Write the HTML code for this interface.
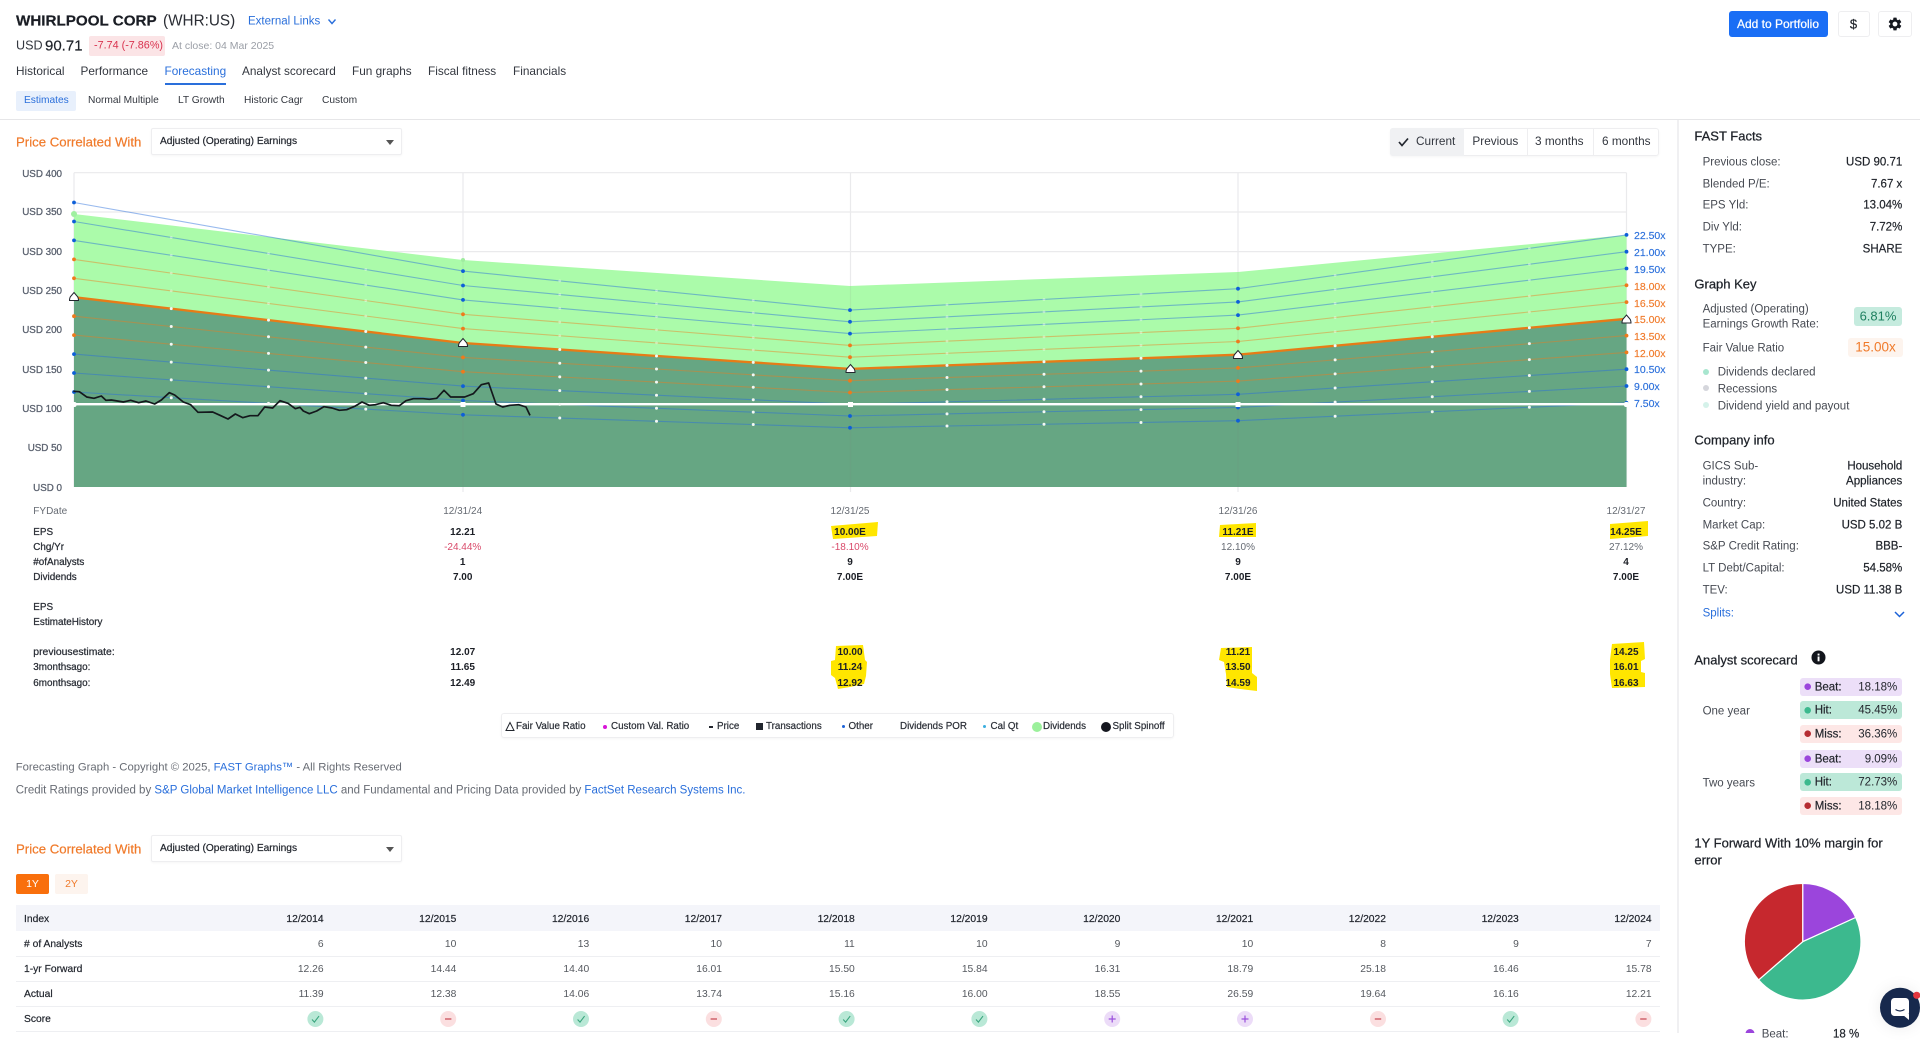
<!DOCTYPE html>
<html><head><meta charset="utf-8"><title>WHIRLPOOL CORP</title>
<style>
html,body{margin:0;padding:0;width:1920px;height:1033px;overflow:hidden;background:#fff;font-family:"Liberation Sans",sans-serif;color:#22262e}
.t{position:absolute;white-space:nowrap;transform:translateY(-50%);line-height:1}
.c{position:absolute;white-space:nowrap;transform:translate(-50%,-50%);line-height:1}
.r{position:absolute;white-space:nowrap;transform:translate(-100%,-50%);line-height:1}
.b{position:absolute;box-sizing:border-box}
.m{-webkit-text-stroke:.2px currentColor}
.tab{font-size:11.8px;color:#33373f}
.sub{font-size:10.2px;color:#33373f}
.y{font-size:9.8px;color:#5c6370;-webkit-text-stroke:.3px #5c6370;margin-top:1.1px}
.x{font-size:10.5px;-webkit-text-stroke:.15px}
.bl{color:#2a6fdb}.or{color:#f07a2a}
.l{font-size:9.9px;color:#2a2e36;-webkit-text-stroke:.25px #2a2e36;margin-top:1.2px}
.v{font-size:10px;font-weight:bold;color:#1c1f26;margin-top:1.2px}
.g{font-size:10px;color:#666b73;margin-top:1.2px}
.lg{font-size:9.8px;color:#2a2e36;-webkit-text-stroke:.2px #2a2e36}
.h{font-size:13px;color:#1e2229;-webkit-text-stroke:.25px #1e2229}
.k{font-size:11.5px;color:#474b53;margin-top:1.8px}
.w{font-size:11.5px;color:#1e2229;-webkit-text-stroke:.2px #1e2229;margin-top:1.8px}
.th{font-size:10.3px;color:#22262e;-webkit-text-stroke:.2px #22262e;margin-top:1.3px}
.td{font-size:10.3px;color:#55595f;margin-top:1.3px}
.pl{position:absolute;left:1800px;width:102.3px;height:18px;border-radius:3px}
.pt{font-size:11.5px;color:#23262d;margin-top:1.2px}
.dots line{stroke-dasharray:0 1 0 1 0 2;stroke-dashoffset:-1}
</style></head><body>
<!-- panel and header rules -->
<div class="b" style="left:0;top:119px;width:1920px;height:1px;background:#e6e6e8"></div>
<div class="b" style="left:1677px;top:120px;width:2px;height:913px;background:#f0f0f2"></div>

<svg class="b" style="left:0;top:0" width="1920" height="1033" viewBox="0 0 1920 1033">
<defs>
<marker id="mb" viewBox="-3 -3 6 6" markerWidth="6" markerHeight="6" markerUnits="userSpaceOnUse"><circle r="1.9" fill="#0d5fd8"/></marker>
<marker id="mo" viewBox="-3 -3 6 6" markerWidth="6" markerHeight="6" markerUnits="userSpaceOnUse"><circle r="1.9" fill="#ee7a1c"/></marker>
</defs>
<!-- grid -->
<g stroke="#eaeaec" stroke-width="1.2" fill="none">
<path d="M74 172.7H1626.5M74 212H1626.5M74 251.6H1626.5M74 172.7V487M463 172.7V492M850.5 172.7V492M1238 172.7V492M1626.5 172.7V487"/>
</g>
<!-- fills -->
<polygon fill="#abfbaa" points="74,214 463,260 850,286 1238,272 1626.5,235 1626.5,319 1238,354.7 850,368.9 463,343 74,297.2"/>
<polygon fill="#66a683" points="74,297.2 463,343 850,368.9 1238,354.7 1626.5,318.8 1626.5,487 74,487"/>
<path d="M463 260V487M850.5 286V487M1238 272V487" stroke="#808080" stroke-opacity=".1" stroke-width="1.2" fill="none"/>
<!-- yellow highlighter -->
<g fill="#ffe600">
<polygon points="831,526 878,522 877,536 833,539"/>
<polygon points="1220,525 1256,523 1256,537 1219,537"/>
<polygon points="1610,524 1648,521 1648,536 1610,539"/>
<polygon points="836,646 863,645 865,660 867,662 866,676 864,684 850,687 838,689 835,678 831,675 831,661 835,660"/>
<polygon points="1221,648 1252,647 1252,660 1252,673 1257,677 1257,691 1240,689 1227,687 1226,674 1224,662 1219,660"/>
<polygon points="1612,644 1644,642 1645,659 1641,661 1641,672 1645,673 1645,687 1612,688 1610,674 1610,660"/>
</g>
<!-- multiple lines -->
<g fill="none" stroke-width="1.1">
<g stroke="#2a6fdb" stroke-opacity=".48">
<polyline marker-start="url(#mb)" marker-mid="url(#mb)" marker-end="url(#mb)" points="74,202.5 463,271.1 850,310.1 1238,288.7 1626.5,234.9"/>
<polyline marker-start="url(#mb)" marker-mid="url(#mb)" marker-end="url(#mb)" points="74,221.5 463,285.5 850,321.8 1238,301.9 1626.5,251.7"/>
<polyline marker-start="url(#mb)" marker-mid="url(#mb)" marker-end="url(#mb)" points="74,240.4 463,299.9 850,333.6 1238,315.1 1626.5,268.5"/>
<polyline marker-start="url(#mb)" marker-mid="url(#mb)" marker-end="url(#mb)" points="74,354.1 463,386.1 850,404.3 1238,394.3 1626.5,369.2"/>
<polyline marker-start="url(#mb)" marker-mid="url(#mb)" marker-end="url(#mb)" points="74,373 463,400.5 850,416 1238,407.5 1626.5,386"/>
<polyline marker-start="url(#mb)" marker-mid="url(#mb)" marker-end="url(#mb)" points="74,392 463,414.8 850,427.8 1238,420.7 1626.5,402.8"/>
</g>
<g stroke="#f07a1a" stroke-opacity=".45">
<polyline marker-start="url(#mo)" marker-mid="url(#mo)" marker-end="url(#mo)" points="74,259.4 463,314.3 850,345.4 1238,328.3 1626.5,285.3"/>
<polyline marker-start="url(#mo)" marker-mid="url(#mo)" marker-end="url(#mo)" points="74,278.3 463,328.6 850,357.2 1238,341.5 1626.5,302.1"/>
<polyline marker-start="url(#mo)" marker-mid="url(#mo)" marker-end="url(#mo)" points="74,316.2 463,357.4 850,380.7 1238,367.9 1626.5,335.6"/>
<polyline marker-start="url(#mo)" marker-mid="url(#mo)" marker-end="url(#mo)" points="74,335.1 463,371.7 850,392.5 1238,381.1 1626.5,352.4"/>
</g>
<polyline stroke="#e67c17" stroke-width="2.3" points="74,297.2 463,343 850,368.9 1238,354.7 1626.5,318.8"/>
</g>
<!-- pale quarter dots in green zone -->
<g class="dots" stroke="#fff" stroke-opacity=".4" stroke-width="2.8" stroke-linecap="round" fill="none">
<line pathLength="4" x1="463" y1="271.1" x2="850" y2="310.1"/><line pathLength="4" x1="850" y1="310.1" x2="1238" y2="288.7"/><line pathLength="4" x1="1238" y1="288.7" x2="1626.5" y2="234.9"/>
<line pathLength="4" x1="74" y1="221.5" x2="463" y2="285.5"/><line pathLength="4" x1="463" y1="285.5" x2="850" y2="321.8"/><line pathLength="4" x1="850" y1="321.8" x2="1238" y2="301.9"/><line pathLength="4" x1="1238" y1="301.9" x2="1626.5" y2="251.7"/>
<line pathLength="4" x1="74" y1="240.4" x2="463" y2="299.9"/><line pathLength="4" x1="463" y1="299.9" x2="850" y2="333.6"/><line pathLength="4" x1="850" y1="333.6" x2="1238" y2="315.1"/><line pathLength="4" x1="1238" y1="315.1" x2="1626.5" y2="268.5"/>
<line pathLength="4" x1="74" y1="259.4" x2="463" y2="314.3"/><line pathLength="4" x1="463" y1="314.3" x2="850" y2="345.4"/><line pathLength="4" x1="850" y1="345.4" x2="1238" y2="328.3"/><line pathLength="4" x1="1238" y1="328.3" x2="1626.5" y2="285.3"/>
<line pathLength="4" x1="74" y1="278.3" x2="463" y2="328.6"/><line pathLength="4" x1="463" y1="328.6" x2="850" y2="357.2"/><line pathLength="4" x1="850" y1="357.2" x2="1238" y2="341.5"/><line pathLength="4" x1="1238" y1="341.5" x2="1626.5" y2="302.1"/>
</g>
<!-- white line -->
<rect x="74" y="403" width="1553" height="2.4" fill="#fff"/>
<!-- white quarter dots in dark zone -->
<g class="dots" stroke="#f4f8f5" stroke-width="3" stroke-linecap="round" fill="none">
<line pathLength="4" x1="74" y1="297.2" x2="463" y2="343"/><line pathLength="4" x1="463" y1="343" x2="850" y2="368.9"/><line pathLength="4" x1="850" y1="368.9" x2="1238" y2="354.7"/><line pathLength="4" x1="1238" y1="354.7" x2="1626.5" y2="318.8"/>
<line pathLength="4" x1="74" y1="316.2" x2="463" y2="357.4"/><line pathLength="4" x1="463" y1="357.4" x2="850" y2="380.7"/><line pathLength="4" x1="850" y1="380.7" x2="1238" y2="367.9"/><line pathLength="4" x1="1238" y1="367.9" x2="1626.5" y2="335.6"/>
<line pathLength="4" x1="74" y1="335.1" x2="463" y2="371.7"/><line pathLength="4" x1="463" y1="371.7" x2="850" y2="392.5"/><line pathLength="4" x1="850" y1="392.5" x2="1238" y2="381.1"/><line pathLength="4" x1="1238" y1="381.1" x2="1626.5" y2="352.4"/>
<line pathLength="4" x1="74" y1="354.1" x2="463" y2="386.1"/><line pathLength="4" x1="463" y1="386.1" x2="850" y2="404.3"/><line pathLength="4" x1="850" y1="404.3" x2="1238" y2="394.3"/><line pathLength="4" x1="1238" y1="394.3" x2="1626.5" y2="369.2"/>
<line pathLength="4" x1="74" y1="373" x2="463" y2="400.5"/><line pathLength="4" x1="463" y1="400.5" x2="850" y2="416"/><line pathLength="4" x1="850" y1="416" x2="1238" y2="407.5"/><line pathLength="4" x1="1238" y1="407.5" x2="1626.5" y2="386"/>
<line pathLength="4" x1="74" y1="392" x2="463" y2="414.8"/><line pathLength="4" x1="463" y1="414.8" x2="850" y2="427.8"/><line pathLength="4" x1="850" y1="427.8" x2="1238" y2="420.7"/><line pathLength="4" x1="1238" y1="420.7" x2="1626.5" y2="402.8"/>
</g>
<!-- dividend squares -->
<g fill="#fff"><rect x="460.5" y="402" width="5" height="5"/><rect x="848" y="402" width="5" height="5"/><rect x="1235.5" y="402" width="5" height="5"/><rect x="71.5" y="402" width="5" height="5" rx="2"/><rect x="1624" y="402" width="5" height="5" rx="2"/></g>
<circle cx="74" cy="214" r="3" fill="#a0f0a0"/>
<circle cx="463" cy="260" r="2" fill="#9fec9f"/>
<!-- price -->
<polyline fill="none" stroke="#14181c" stroke-width="1.7" stroke-linejoin="round" transform="translate(40,340) scale(.33333)" vector-effect="non-scaling-stroke" points="100,154 118,155 140,171 162,175 184,168 198,181 214,180 250,186 272,181 296,188 318,183 344,192 364,180 388,158 404,165 430,186 452,194 474,217 518,216 540,226 564,237 586,222 608,233 630,227 654,227 674,201 698,204 720,182 744,190 766,206 780,202 790,213 808,221 830,213 852,200 876,204 898,211 920,209 944,199 966,186 988,196 1006,194 1030,188 1054,196 1078,197 1098,182 1120,176 1150,176 1168,178 1190,175 1212,151 1232,171 1274,171 1300,161 1324,134 1346,129 1368,192 1388,201 1410,196 1436,194 1458,201 1470,226"/>
<!-- fair-value markers -->
<g fill="#fff" stroke="#22262e" stroke-width="1">
<path d="M69.5 300.5 Q69.5 297.5 71 296 L74 292.5 L77 296 Q78.5 297.5 78.5 300.5Z"/>
<path d="M458.5 346.5 Q458.5 343.5 460 342 L463 338.5 L466 342 Q467.5 343.5 467.5 346.5Z"/>
<path d="M846 372.5 Q846 369.5 847.5 368 L850.5 364.5 L853.5 368 Q855 369.5 855 372.5Z"/>
<path d="M1233.5 358.5 Q1233.5 355.5 1235 354 L1238 350.5 L1241 354 Q1242.5 355.5 1242.5 358.5Z"/>
<path d="M1622 323 Q1622 320 1623.5 318.5 L1626.5 315 L1629.5 318.5 Q1631 320 1631 323Z"/>
</g>
<!-- pie -->
<path d="M1802.7 941.7V883.4A58.3 58.3 0 0 1 1855.7 917.5Z" fill="#9b45dc" stroke="#fff" stroke-width="1.2"/>
<path d="M1802.7 941.7L1855.7 917.5A58.3 58.3 0 0 1 1758.6 979.9Z" fill="#3cb98e" stroke="#fff" stroke-width="1.2"/>
<path d="M1802.7 941.7L1758.6 979.9A58.3 58.3 0 0 1 1802.7 883.4Z" fill="#c6282e" stroke="#fff" stroke-width="1.2"/>
<circle cx="1750" cy="1033.5" r="4.5" fill="#9b45dc"/>
</svg>

<!-- header -->
<div class="t m" style="left:16px;top:20.7px;font-size:15.2px;font-weight:bold;color:#1a1d24">WHIRLPOOL CORP</div>
<div class="t" style="left:163px;top:20.7px;font-size:15.3px;color:#2a2d34">(WHR:US)</div>
<div class="t bl" style="left:248px;top:21.8px;font-size:11.5px">External Links</div>
<svg class="b" style="left:327px;top:17.5px" width="10" height="8" viewBox="0 0 10 8"><path d="M1.5 1.5L5 5.5L8.5 1.5" fill="none" stroke="#2a6fdb" stroke-width="1.4"/></svg>
<div class="t" style="left:16px;top:46.3px;font-size:12.6px;color:#33373f">USD</div>
<div class="t m" style="left:45px;top:46.3px;font-size:15px;color:#1e2229">90.71</div>
<div class="b" style="left:89px;top:36px;width:76px;height:20px;background:#fbe4e6;border-radius:2px"></div>
<div class="t" style="left:94px;top:46px;font-size:10.8px;color:#d9334f">-7.74 (-7.86%)</div>
<div class="t" style="left:172px;top:46px;font-size:10.5px;color:#9a9ea6">At close: 04 Mar 2025</div>

<div class="t tab" style="left:16px;top:72px">Historical</div>
<div class="t tab" style="left:80.5px;top:72px">Performance</div>
<div class="t tab bl" style="left:164.5px;top:72px">Forecasting</div>
<div class="b" style="left:164.5px;top:82.7px;width:61px;height:2px;background:#2a6fdb"></div>
<div class="t tab" style="left:242px;top:72px">Analyst scorecard</div>
<div class="t tab" style="left:352px;top:72px">Fun graphs</div>
<div class="t tab" style="left:428px;top:72px">Fiscal fitness</div>
<div class="t tab" style="left:513px;top:72px">Financials</div>

<div class="b" style="left:16px;top:91px;width:60px;height:20px;background:#e8f0fc;border-radius:2px"></div>
<div class="t sub bl" style="left:24px;top:100.7px">Estimates</div>
<div class="t sub" style="left:88px;top:100.7px">Normal Multiple</div>
<div class="t sub" style="left:178px;top:100.7px">LT Growth</div>
<div class="t sub" style="left:244px;top:100.7px">Historic Cagr</div>
<div class="t sub" style="left:322px;top:100.7px">Custom</div>

<!-- top right buttons -->
<div class="b" style="left:1728.5px;top:10.7px;width:99.5px;height:26.6px;background:#1a6ef5;border-radius:3px"></div>
<div class="c m" style="left:1778px;top:24px;font-size:12px;color:#fff">Add to Portfolio</div>
<div class="b" style="left:1837.6px;top:11px;width:32.4px;height:26px;border:1px solid #eeeef0;border-radius:3px"></div>
<div class="c m" style="left:1853.5px;top:24px;font-size:13px;color:#1e2229">$</div>
<div class="b" style="left:1878px;top:11px;width:33.6px;height:26px;border:1px solid #eeeef0;border-radius:3px"></div>
<svg class="b" style="left:1887px;top:16px" width="16" height="16" viewBox="0 0 24 24"><path fill="#15181f" d="M19.14 12.94c.04-.3.06-.61.06-.94 0-.32-.02-.64-.07-.94l2.03-1.58c.18-.14.23-.41.12-.61l-1.92-3.32c-.12-.22-.37-.29-.59-.22l-2.39.96c-.5-.38-1.03-.7-1.62-.94l-.36-2.54c-.04-.24-.24-.41-.48-.41h-3.84c-.24 0-.43.17-.47.41l-.36 2.54c-.59.24-1.13.57-1.62.94l-2.39-.96c-.22-.08-.47 0-.59.22L2.74 8.87c-.12.21-.08.47.12.61l2.03 1.58c-.05.3-.09.63-.09.94s.02.64.07.94l-2.03 1.58c-.18.14-.23.41-.12.61l1.92 3.32c.12.22.37.29.59.22l2.39-.96c.5.38 1.03.7 1.62.94l.36 2.54c.05.24.24.41.48.41h3.84c.24 0 .44-.17.47-.41l.36-2.54c.59-.24 1.13-.56 1.62-.94l2.39.96c.22.08.47 0 .59-.22l1.92-3.32c.12-.22.07-.47-.12-.61l-2.01-1.58zM12 15.6c-1.98 0-3.6-1.62-3.6-3.6s1.62-3.6 3.6-3.6 3.6 1.62 3.6 3.6-1.62 3.6-3.6 3.6z"/></svg>

<!-- price correlated 1 -->
<div class="t or m" style="left:16px;top:142px;font-size:13.2px">Price Correlated With</div>
<div class="b" style="left:151px;top:128px;width:251px;height:27px;border:1px solid #eeeef0;border-radius:2px;box-shadow:0 1px 2px rgba(0,0,0,.04)"></div>
<div class="t sub m" style="left:160px;top:142.4px;color:#22262e">Adjusted (Operating) Earnings</div>
<svg class="b" style="left:386px;top:139.5px" width="8" height="5"><path d="M0 0H8L4 5Z" fill="#555"/></svg>

<!-- segmented -->
<div class="b" style="left:1390px;top:128px;width:269px;height:28px;border:1px solid #eeeef0;border-radius:3px;box-shadow:0 1px 2px rgba(0,0,0,.04)"></div>
<div class="b" style="left:1390px;top:128px;width:73.5px;height:28px;background:#f0f1f3;border-radius:3px 0 0 3px"></div>
<div class="b" style="left:1527px;top:128px;width:1px;height:28px;background:#eeeef0"></div>
<div class="b" style="left:1592.5px;top:128px;width:1px;height:28px;background:#eeeef0"></div>
<svg class="b" style="left:1398px;top:137px" width="11" height="10"><path d="M1 5L4 8.5L10 1.5" fill="none" stroke="#22262e" stroke-width="1.7"/></svg>
<div class="t tab" style="left:1416px;top:142px">Current</div>
<div class="t tab" style="left:1472.4px;top:142px">Previous</div>
<div class="t tab" style="left:1535px;top:142px">3 months</div>
<div class="t tab" style="left:1602px;top:142px">6 months</div>

<!-- y axis -->
<div class="r y" style="left:62px;top:174px">USD 400</div>
<div class="r y" style="left:62px;top:212.3px">USD 350</div>
<div class="r y" style="left:62px;top:251.7px">USD 300</div>
<div class="r y" style="left:62px;top:291px">USD 250</div>
<div class="r y" style="left:62px;top:330.3px">USD 200</div>
<div class="r y" style="left:62px;top:369.7px">USD 150</div>
<div class="r y" style="left:62px;top:409px">USD 100</div>
<div class="r y" style="left:62px;top:448.3px">USD 50</div>
<div class="r y" style="left:62px;top:487.7px">USD 0</div>

<!-- right axis labels -->
<div class="t x bl" style="left:1634px;top:235.5px">22.50x</div>
<div class="t x bl" style="left:1634px;top:252.5px">21.00x</div>
<div class="t x bl" style="left:1634px;top:269.5px">19.50x</div>
<div class="t x or" style="left:1634px;top:286.5px">18.00x</div>
<div class="t x or" style="left:1634px;top:303.5px">16.50x</div>
<div class="t x or" style="left:1634px;top:320px">15.00x</div>
<div class="t x or" style="left:1634px;top:336.5px">13.50x</div>
<div class="t x or" style="left:1634px;top:353.5px">12.00x</div>
<div class="t x bl" style="left:1634px;top:370px">10.50x</div>
<div class="t x bl" style="left:1634px;top:387px">9.00x</div>
<div class="t x bl" style="left:1634px;top:403.5px">7.50x</div>

<!-- data rows -->
<div class="t g" style="left:33.3px;top:510.7px">FYDate</div>
<div class="c g" style="left:462.7px;top:510.7px">12/31/24</div>
<div class="c g" style="left:850px;top:510.7px">12/31/25</div>
<div class="c g" style="left:1238px;top:510.7px">12/31/26</div>
<div class="c g" style="left:1626px;top:510.7px">12/31/27</div>

<div class="t l" style="left:33.3px;top:531.7px">EPS</div>
<div class="c v" style="left:462.7px;top:531.7px">12.21</div>
<div class="c v" style="left:850px;top:531.7px">10.00E</div>
<div class="c v" style="left:1238px;top:531.7px">11.21E</div>
<div class="c v" style="left:1626px;top:531.7px">14.25E</div>

<div class="t l" style="left:33.3px;top:547px">Chg/Yr</div>
<div class="c" style="left:462.7px;top:547px;margin-top:1.2px;font-size:10px;color:#d94a6a">-24.44%</div>
<div class="c" style="left:850px;top:547px;margin-top:1.2px;font-size:10px;color:#d94a6a">-18.10%</div>
<div class="c g" style="left:1238px;top:547px">12.10%</div>
<div class="c g" style="left:1626px;top:547px">27.12%</div>

<div class="t l" style="left:33.3px;top:562px">#ofAnalysts</div>
<div class="c v" style="left:462.7px;top:562px">1</div>
<div class="c v" style="left:850px;top:562px">9</div>
<div class="c v" style="left:1238px;top:562px">9</div>
<div class="c v" style="left:1626px;top:562px">4</div>

<div class="t l" style="left:33.3px;top:577px">Dividends</div>
<div class="c v" style="left:462.7px;top:577px">7.00</div>
<div class="c v" style="left:850px;top:577px">7.00E</div>
<div class="c v" style="left:1238px;top:577px">7.00E</div>
<div class="c v" style="left:1626px;top:577px">7.00E</div>

<div class="t l" style="left:33.3px;top:607px">EPS</div>
<div class="t l" style="left:33.3px;top:622.3px">EstimateHistory</div>

<div class="t l" style="left:33.3px;top:652.3px;font-size:10.4px">previousestimate:</div>
<div class="c v" style="left:462.7px;top:652.3px">12.07</div>
<div class="c v" style="left:850px;top:652.3px">10.00</div>
<div class="c v" style="left:1238px;top:652.3px">11.21</div>
<div class="c v" style="left:1626px;top:652.3px">14.25</div>

<div class="t l" style="left:33.3px;top:667.3px">3monthsago:</div>
<div class="c v" style="left:462.7px;top:667.3px">11.65</div>
<div class="c v" style="left:850px;top:667.3px">11.24</div>
<div class="c v" style="left:1238px;top:667.3px">13.50</div>
<div class="c v" style="left:1626px;top:667.3px">16.01</div>

<div class="t l" style="left:33.3px;top:682.7px">6monthsago:</div>
<div class="c v" style="left:462.7px;top:682.7px">12.49</div>
<div class="c v" style="left:850px;top:682.7px">12.92</div>
<div class="c v" style="left:1238px;top:682.7px">14.59</div>
<div class="c v" style="left:1626px;top:682.7px">16.63</div>

<!-- legend -->
<div class="b" style="left:501px;top:713px;width:673px;height:25px;border:1px solid #eeeef0;border-radius:3px;box-shadow:0 1px 2px rgba(0,0,0,.04)"></div>
<svg class="b" style="left:505px;top:721px" width="10" height="11"><path d="M1 9.5 L5 1.5 L9 9.5Z" fill="#fff" stroke="#22262e" stroke-width="1"/></svg>
<div class="t lg" style="left:516px;top:726.5px">Fair Value Ratio</div>
<div class="b" style="left:603px;top:724.5px;width:4px;height:4px;border-radius:50%;background:#d815d8"></div>
<div class="t lg" style="left:611px;top:726.5px">Custom Val. Ratio</div>
<div class="b" style="left:708.5px;top:726px;width:4px;height:1.5px;background:#22262e"></div>
<div class="t lg" style="left:717px;top:726.5px">Price</div>
<div class="b" style="left:756px;top:723px;width:6.5px;height:7px;background:#22262e"></div>
<div class="t lg" style="left:766px;top:726.5px">Transactions</div>
<div class="b" style="left:841.5px;top:725px;width:3px;height:3px;border-radius:50%;background:#1c62d8"></div>
<div class="t lg" style="left:848.5px;top:726.5px">Other</div>
<div class="t lg" style="left:900px;top:726.5px">Dividends POR</div>
<div class="b" style="left:983px;top:725px;width:3px;height:3px;border-radius:50%;background:#3aaee0"></div>
<div class="t lg" style="left:990.5px;top:726.5px">Cal Qt</div>
<div class="b" style="left:1032px;top:721.5px;width:10px;height:10px;border-radius:50%;background:#9bf09b"></div>
<div class="t lg" style="left:1043px;top:726.5px">Dividends</div>
<div class="b" style="left:1101px;top:721.5px;width:10px;height:10px;border-radius:50%;background:#15171f"></div>
<div class="t lg" style="left:1112.5px;top:726.5px">Split Spinoff</div>

<!-- credits -->
<div class="t" style="left:15.7px;top:767.9px;font-size:11.3px;color:#686c74">Forecasting Graph - Copyright © 2025, <span class="bl">FAST Graphs™</span> - All Rights Reserved</div>
<div class="t" style="left:15.7px;top:791.4px;font-size:11.5px;color:#686c74">Credit Ratings provided by <span class="bl">S&amp;P Global Market Intelligence LLC</span> and Fundamental and Pricing Data provided by <span class="bl">FactSet Research Systems Inc.</span></div>

<!-- price correlated 2 -->
<div class="t or m" style="left:16px;top:848.7px;font-size:13.2px">Price Correlated With</div>
<div class="b" style="left:151px;top:835px;width:251px;height:27px;border:1px solid #eeeef0;border-radius:2px;box-shadow:0 1px 2px rgba(0,0,0,.04)"></div>
<div class="t sub m" style="left:160px;top:849px;color:#22262e">Adjusted (Operating) Earnings</div>
<svg class="b" style="left:386px;top:846.5px" width="8" height="5"><path d="M0 0H8L4 5Z" fill="#555"/></svg>
<div class="b" style="left:16px;top:874px;width:33px;height:20px;background:#f96f0c;border-radius:2px"></div>
<div class="c" style="left:32.5px;top:884px;font-size:10.5px;color:#fff">1Y</div>
<div class="b" style="left:55px;top:874px;width:33px;height:20px;background:#fdf4ee;border-radius:2px"></div>
<div class="c or" style="left:71.5px;top:884px;font-size:10.5px">2Y</div>

<!-- scorecard table -->
<div class="b" style="left:16px;top:905px;width:1644px;height:26px;background:#f4f5fa"></div>
<div class="b" style="left:16px;top:955.5px;width:1644px;height:1px;background:#eeeff2"></div>
<div class="b" style="left:16px;top:980.5px;width:1644px;height:1px;background:#eeeff2"></div>
<div class="b" style="left:16px;top:1005.8px;width:1644px;height:1px;background:#eeeff2"></div>
<div class="b" style="left:16px;top:1031px;width:1644px;height:1px;background:#eeeff2"></div>

<div class="t th" style="left:24px;top:918.4px">Index</div>
<div class="r th" style="left:323.6px;top:918.4px">12/2014</div>
<div class="r th" style="left:456.4px;top:918.4px">12/2015</div>
<div class="r th" style="left:589.2px;top:918.4px">12/2016</div>
<div class="r th" style="left:722px;top:918.4px">12/2017</div>
<div class="r th" style="left:854.8px;top:918.4px">12/2018</div>
<div class="r th" style="left:987.6px;top:918.4px">12/2019</div>
<div class="r th" style="left:1120.4px;top:918.4px">12/2020</div>
<div class="r th" style="left:1253.2px;top:918.4px">12/2021</div>
<div class="r th" style="left:1386px;top:918.4px">12/2022</div>
<div class="r th" style="left:1518.8px;top:918.4px">12/2023</div>
<div class="r th" style="left:1651.6px;top:918.4px">12/2024</div>

<div class="t th" style="left:24px;top:943.7px"># of Analysts</div>
<div class="r td" style="left:323.6px;top:943.7px">6</div>
<div class="r td" style="left:456.4px;top:943.7px">10</div>
<div class="r td" style="left:589.2px;top:943.7px">13</div>
<div class="r td" style="left:722px;top:943.7px">10</div>
<div class="r td" style="left:854.8px;top:943.7px">11</div>
<div class="r td" style="left:987.6px;top:943.7px">10</div>
<div class="r td" style="left:1120.4px;top:943.7px">9</div>
<div class="r td" style="left:1253.2px;top:943.7px">10</div>
<div class="r td" style="left:1386px;top:943.7px">8</div>
<div class="r td" style="left:1518.8px;top:943.7px">9</div>
<div class="r td" style="left:1651.6px;top:943.7px">7</div>

<div class="t th" style="left:24px;top:968.7px">1-yr Forward</div>
<div class="r td" style="left:323.6px;top:968.7px">12.26</div>
<div class="r td" style="left:456.4px;top:968.7px">14.44</div>
<div class="r td" style="left:589.2px;top:968.7px">14.40</div>
<div class="r td" style="left:722px;top:968.7px">16.01</div>
<div class="r td" style="left:854.8px;top:968.7px">15.50</div>
<div class="r td" style="left:987.6px;top:968.7px">15.84</div>
<div class="r td" style="left:1120.4px;top:968.7px">16.31</div>
<div class="r td" style="left:1253.2px;top:968.7px">18.79</div>
<div class="r td" style="left:1386px;top:968.7px">25.18</div>
<div class="r td" style="left:1518.8px;top:968.7px">16.46</div>
<div class="r td" style="left:1651.6px;top:968.7px">15.78</div>

<div class="t th" style="left:24px;top:993.7px">Actual</div>
<div class="r td" style="left:323.6px;top:993.7px">11.39</div>
<div class="r td" style="left:456.4px;top:993.7px">12.38</div>
<div class="r td" style="left:589.2px;top:993.7px">14.06</div>
<div class="r td" style="left:722px;top:993.7px">13.74</div>
<div class="r td" style="left:854.8px;top:993.7px">15.16</div>
<div class="r td" style="left:987.6px;top:993.7px">16.00</div>
<div class="r td" style="left:1120.4px;top:993.7px">18.55</div>
<div class="r td" style="left:1253.2px;top:993.7px">26.59</div>
<div class="r td" style="left:1386px;top:993.7px">19.64</div>
<div class="r td" style="left:1518.8px;top:993.7px">16.16</div>
<div class="r td" style="left:1651.6px;top:993.7px">12.21</div>

<div class="t th" style="left:24px;top:1019px">Score</div>
<svg class="b" style="left:0;top:1000px" width="1680" height="33" viewBox="0 1000 1680 33">
<g fill="#b9e8d6"><circle cx="315.4" cy="1019" r="8"/><circle cx="581" cy="1019" r="8"/><circle cx="846.6" cy="1019" r="8"/><circle cx="979.4" cy="1019" r="8"/><circle cx="1510.6" cy="1019" r="8"/></g>
<g fill="none" stroke="#3aa57e" stroke-width="1.1"><path d="M312 1019.5l2.4 2.6 4.6-6"/><path d="M577.6 1019.5l2.4 2.6 4.6-6"/><path d="M843.2 1019.5l2.4 2.6 4.6-6"/><path d="M976 1019.5l2.4 2.6 4.6-6"/><path d="M1507.2 1019.5l2.4 2.6 4.6-6"/></g>
<g fill="#fbdfe0"><circle cx="448.2" cy="1019" r="8"/><circle cx="713.8" cy="1019" r="8"/><circle cx="1378" cy="1019" r="8"/><circle cx="1643.4" cy="1019" r="8"/></g>
<g stroke="#c84b55" stroke-width="1.3"><path d="M445 1019h6.4M710.6 1019h6.4M1374.8 1019h6.4M1640.2 1019h6.4"/></g>
<g fill="#ecdcf8"><circle cx="1112.2" cy="1019" r="8"/><circle cx="1245" cy="1019" r="8"/></g>
<g stroke="#9a4fdc" stroke-width="1.2"><path d="M1108.7 1019h7M1112.2 1015.5v7M1241.5 1019h7M1245 1015.5v7"/></g>
</svg>

<!-- sidebar -->
<div class="t h" style="left:1694.4px;top:136.2px">FAST Facts</div>
<div class="t k" style="left:1702.6px;top:161.3px">Previous close:</div><div class="r w" style="left:1902.3px;top:161.3px">USD 90.71</div>
<div class="t k" style="left:1702.6px;top:183px">Blended P/E:</div><div class="r w" style="left:1902.3px;top:183px">7.67 x</div>
<div class="t k" style="left:1702.6px;top:204.7px">EPS Yld:</div><div class="r w" style="left:1902.3px;top:204.7px">13.04%</div>
<div class="t k" style="left:1702.6px;top:226.7px">Div Yld:</div><div class="r w" style="left:1902.3px;top:226.7px">7.72%</div>
<div class="t k" style="left:1702.6px;top:248.3px">TYPE:</div><div class="r w" style="left:1902.3px;top:248.3px">SHARE</div>

<div class="t h" style="left:1694.4px;top:284px">Graph Key</div>
<div class="t k" style="left:1702.6px;top:308.3px">Adjusted (Operating)</div>
<div class="t k" style="left:1702.6px;top:323.3px">Earnings Growth Rate:</div>
<div class="b" style="left:1853.5px;top:306.7px;width:48.8px;height:19px;background:#c5ebde;border-radius:3px"></div>
<div class="c" style="left:1878px;top:316.2px;font-size:13px;color:#1f8060">6.81%</div>
<div class="t k" style="left:1702.6px;top:347.3px">Fair Value Ratio</div>
<div class="b" style="left:1848px;top:338px;width:54.5px;height:18.7px;background:#fdf4ee;border-radius:3px"></div>
<div class="c or" style="left:1875.5px;top:347.3px;font-size:13.5px">15.00x</div>

<div class="b" style="left:1703px;top:368.7px;width:6px;height:6px;border-radius:50%;background:#a8e6cf"></div>
<div class="t k" style="left:1717.7px;top:371.7px">Dividends declared</div>
<div class="b" style="left:1703px;top:385.3px;width:6px;height:6px;border-radius:50%;background:#d5d6dc"></div>
<div class="t k" style="left:1717.7px;top:388.3px">Recessions</div>
<div class="b" style="left:1703px;top:402px;width:6px;height:6px;border-radius:50%;background:#d5f2ea"></div>
<div class="t k" style="left:1717.7px;top:405px">Dividend yield and payout</div>

<div class="t h" style="left:1694.4px;top:440.2px">Company info</div>
<div class="t k" style="left:1702.6px;top:465px">GICS Sub-</div><div class="r w" style="left:1902.3px;top:465px">Household</div>
<div class="t k" style="left:1702.6px;top:480.3px">industry:</div><div class="r w" style="left:1902.3px;top:480.3px">Appliances</div>
<div class="t k" style="left:1702.6px;top:502.3px">Country:</div><div class="r w" style="left:1902.3px;top:502.3px">United States</div>
<div class="t k" style="left:1702.6px;top:524px">Market Cap:</div><div class="r w" style="left:1902.3px;top:524px">USD 5.02 B</div>
<div class="t k" style="left:1702.6px;top:545.7px">S&amp;P Credit Rating:</div><div class="r w" style="left:1902.3px;top:545.7px">BBB-</div>
<div class="t k" style="left:1702.6px;top:567.3px">LT Debt/Capital:</div><div class="r w" style="left:1902.3px;top:567.3px">54.58%</div>
<div class="t k" style="left:1702.6px;top:589px">TEV:</div><div class="r w" style="left:1902.3px;top:589px">USD 11.38 B</div>
<div class="t k" style="left:1702.6px;top:612px;color:#2a6fdb">Splits:</div>
<svg class="b" style="left:1894px;top:611px" width="11" height="7"><path d="M1 1L5.5 5.5L10 1" fill="none" stroke="#1c62d8" stroke-width="1.5"/></svg>

<div class="t h" style="left:1694.4px;top:660.2px">Analyst scorecard</div>
<svg class="b" style="left:1811px;top:649.5px" width="15" height="15" viewBox="0 0 15 15"><circle cx="7.5" cy="7.5" r="7" fill="#12151c"/><rect x="6.6" y="6.5" width="1.9" height="4.8" fill="#fff"/><rect x="6.6" y="3.6" width="1.9" height="1.9" fill="#fff"/></svg>

<div class="t k" style="left:1702.6px;top:710.3px">One year</div>
<div class="t k" style="left:1702.6px;top:782.3px">Two years</div>

<div class="pl" style="top:677.7px;background:#ecdff8"></div>
<div class="pl" style="top:701.3px;background:#bce8d8"></div>
<div class="pl" style="top:724.7px;background:#fde7e6"></div>
<div class="pl" style="top:749.7px;background:#ecdff8"></div>
<div class="pl" style="top:773.3px;background:#bce8d8"></div>
<div class="pl" style="top:796.7px;background:#fde7e6"></div>
<svg class="b" style="left:1800px;top:670px" width="16" height="150" viewBox="1800 670 16 150">
<circle cx="1807.7" cy="686.7" r="3.3" fill="#9b45dc"/><circle cx="1807.7" cy="710.3" r="3.3" fill="#3cb98e"/><circle cx="1807.7" cy="733.7" r="3.3" fill="#b52c32"/>
<circle cx="1807.7" cy="758.7" r="3.3" fill="#9b45dc"/><circle cx="1807.7" cy="782.3" r="3.3" fill="#3cb98e"/><circle cx="1807.7" cy="805.7" r="3.3" fill="#b52c32"/>
</svg>
<div class="t pt m" style="left:1814.7px;top:686.7px">Beat:</div><div class="r pt" style="left:1897.3px;top:686.7px">18.18%</div>
<div class="t pt m" style="left:1814.7px;top:710.3px">Hit:</div><div class="r pt" style="left:1897.3px;top:710.3px">45.45%</div>
<div class="t pt m" style="left:1814.7px;top:733.7px">Miss:</div><div class="r pt" style="left:1897.3px;top:733.7px">36.36%</div>
<div class="t pt m" style="left:1814.7px;top:758.7px">Beat:</div><div class="r pt" style="left:1897.3px;top:758.7px">9.09%</div>
<div class="t pt m" style="left:1814.7px;top:782.3px">Hit:</div><div class="r pt" style="left:1897.3px;top:782.3px">72.73%</div>
<div class="t pt m" style="left:1814.7px;top:805.7px">Miss:</div><div class="r pt" style="left:1897.3px;top:805.7px">18.18%</div>

<div class="t h" style="left:1694.4px;top:843.3px">1Y Forward With 10% margin for</div>
<div class="t h" style="left:1694.4px;top:860px">error</div>

<div class="t k" style="left:1761.7px;top:1033px">Beat:</div>
<div class="t w" style="left:1833px;top:1033px">18 %</div>

<!-- chat bubble -->
<div class="b" style="left:1880px;top:987.7px;width:40px;height:40px;border-radius:50%;box-shadow:0 0 16px rgba(0,0,0,.08)"></div>
<svg class="b" style="left:1860px;top:970px" width="60" height="63" viewBox="1860 970 60 63">
<circle cx="1900" cy="1007.7" r="20" fill="#17294d"/>
<rect x="1891" y="998" width="18" height="18" rx="3.5" fill="#fff"/>
<path d="M1903 1015l6 5v-6z" fill="#fff"/>
<path d="M1895.5 1009.5q4.5 3 9 0" fill="none" stroke="#17294d" stroke-width="1.2"/>
<circle cx="1916.7" cy="995.3" r="3.6" fill="#e5373f"/>
</svg>
</body></html>
